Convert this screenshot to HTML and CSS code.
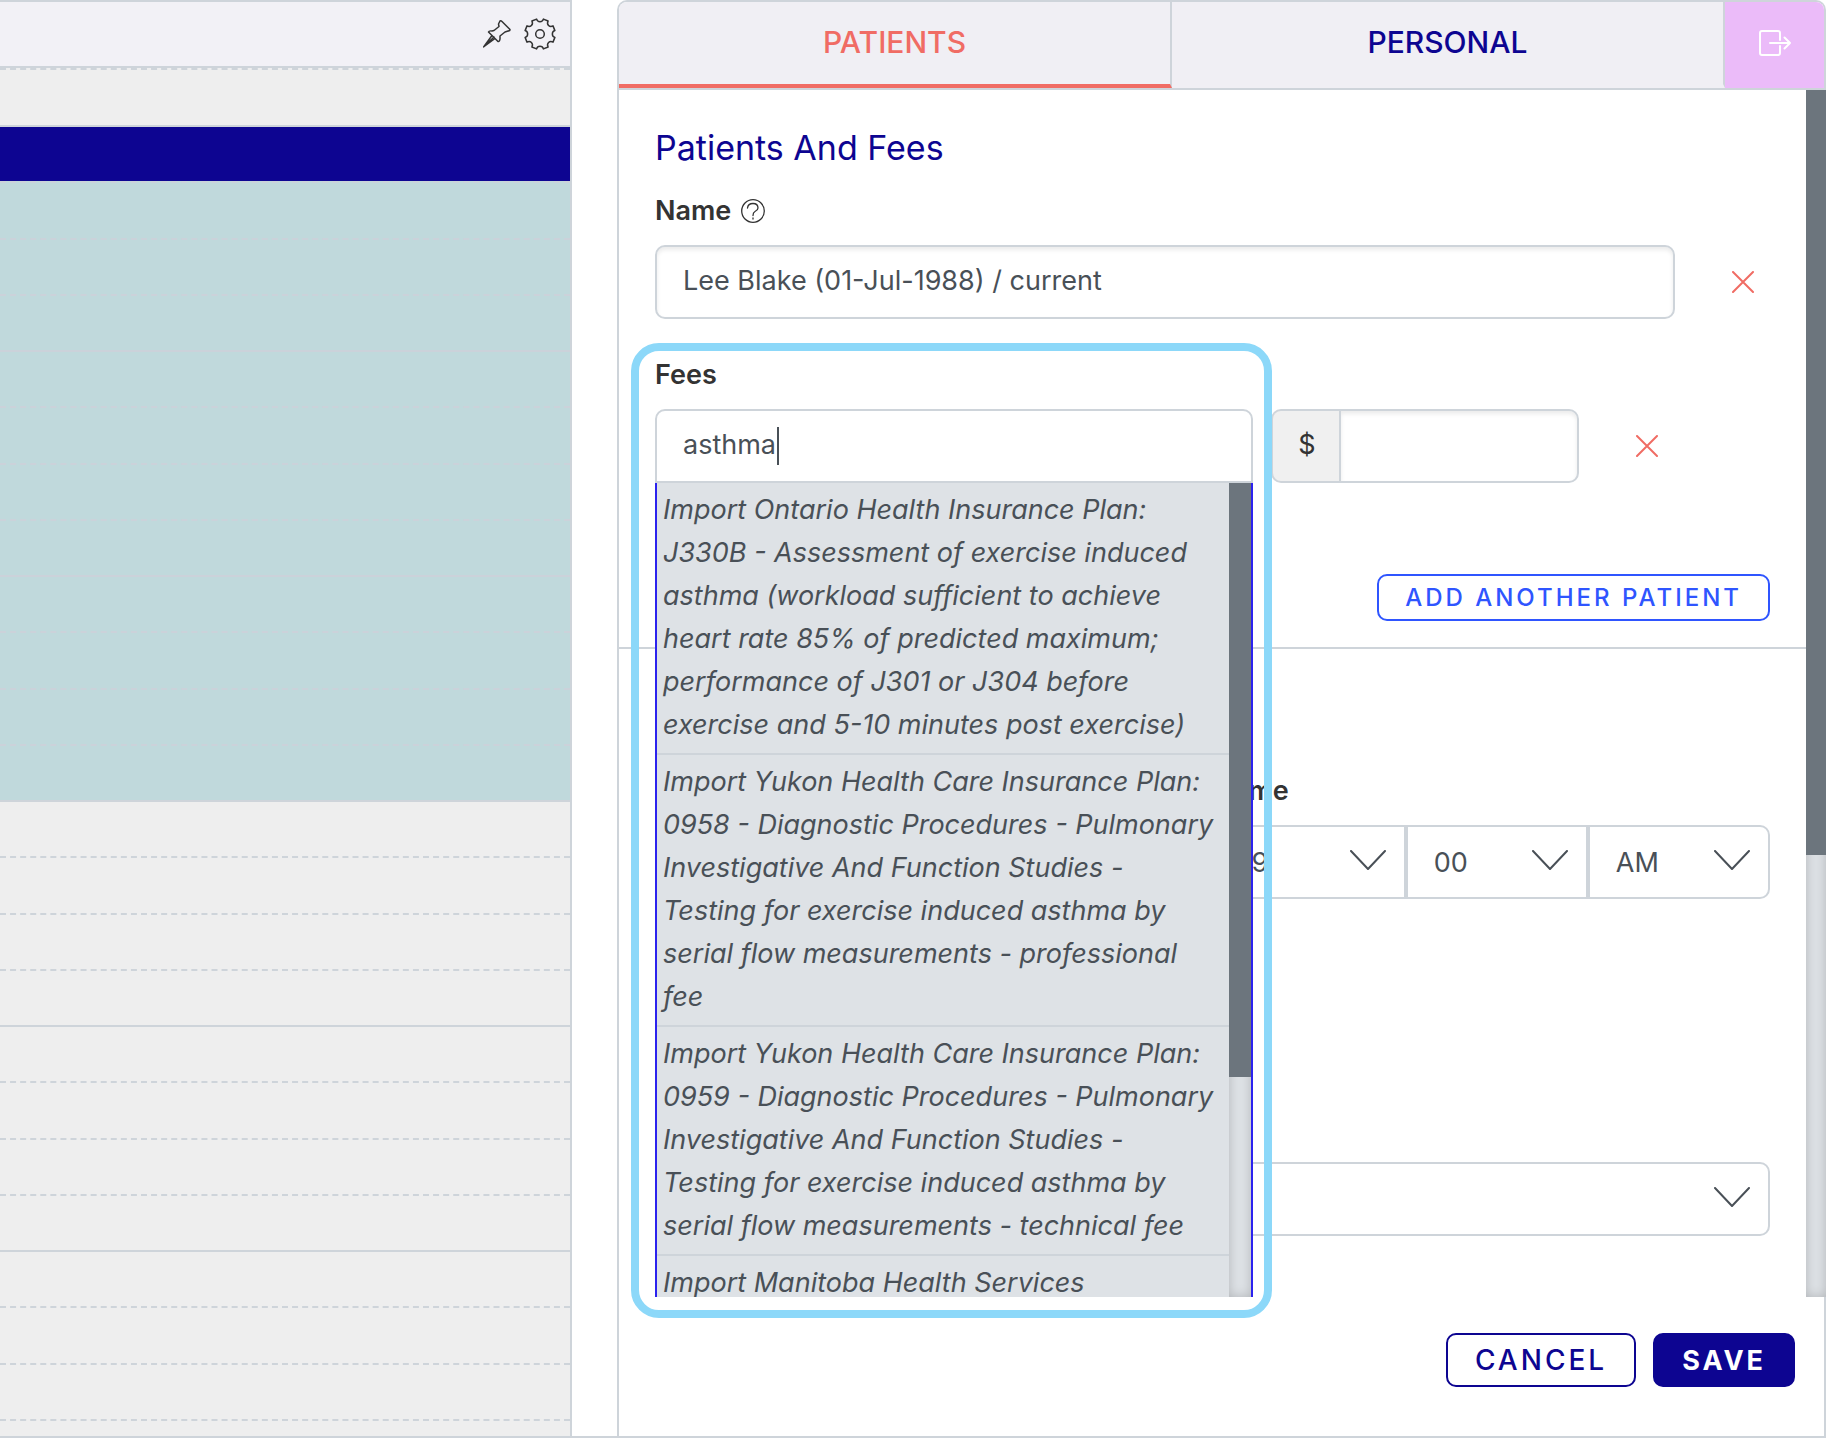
FILE: index.html
```html
<!DOCTYPE html>
<html lang="en">
  <head>
    <meta charset="UTF-8" />
    <meta name="viewport" content="width=device-width, initial-scale=1" />
    <title>Patients And Fees</title>
    <link rel="stylesheet" href="styles.css">
  </head>
  <body>
    <main class="layout">
      <section class="calendar" aria-label="Calendar">
        <header class="calendar-header">
          <button class="icon-button" type="button" aria-label="Pin">
            <svg width="28" height="28" viewBox="0 0 28 28"><path d="M17 1 Q18 0.500 19 1.500 L27 9.500 Q27 11 25 11 L22 12 L17 16 V19 Q16.500 22 15 21.500 L5.500 12 Q6 10.500 9 11 L11 10.500 L16 6.500 L15.500 4 Z M9 15.500 L0.500 27 L12 18.500 M11 17 L1 26.500" /></svg>
          </button>
          <button class="icon-button" type="button" aria-label="Settings">
            <svg width="32" height="32" viewBox="0 0 32 32"><circle cx="16" cy="16" r="4.300" /><path d="M30.900 12.600 C27.500 13.500 27.500 18.500 30.900 19.400 L29 24.100 C25.500 22.300 22.300 25.500 24.100 29 L19.400 30.900 C18.500 27.500 13.500 27.500 12.600 30.900 L7.900 29 C9.700 25.500 6.500 22.300 3 24.100 L1.100 19.400 C4.500 18.500 4.500 13.500 1.100 12.600 L3 7.900 C6.500 9.700 9.700 6.500 7.900 3 L12.600 1.100 C13.500 4.500 18.500 4.500 19.400 1.100 L24.100 3 C22.300 6.500 25.500 9.700 29 7.900 Z" /></svg>
          </button>
        </header>
        <div class="slot slot-first"></div>
        <div class="hour booked">
          <div class="slot event-title"></div>
          <div class="slot"></div>
          <div class="slot"></div>
          <div class="slot"></div>
        </div>
        <div class="hour booked">
          <div class="slot"></div>
          <div class="slot"></div>
          <div class="slot"></div>
          <div class="slot"></div>
        </div>
        <div class="hour booked">
          <div class="slot"></div>
          <div class="slot"></div>
          <div class="slot"></div>
          <div class="slot"></div>
        </div>
        <div class="hour">
          <div class="slot"></div>
          <div class="slot"></div>
          <div class="slot"></div>
          <div class="slot"></div>
        </div>
        <div class="hour">
          <div class="slot"></div>
          <div class="slot"></div>
          <div class="slot"></div>
          <div class="slot"></div>
        </div>
        <div class="hour">
          <div class="slot"></div>
          <div class="slot"></div>
          <div class="slot"></div>
          <div class="slot"></div>
        </div>
      </section>

      <form class="panel">
        <nav class="tabs">
          <button class="tab active" type="button">PATIENTS</button>
          <button class="tab" type="button">PERSONAL</button>
          <button class="tab-exit" type="button" aria-label="Close panel">
            <svg width="32" height="26" viewBox="0 0 32 26"><path d="M21 10 V3 Q21 1 19 1 H3 Q1 1 1 3 V23 Q1 25 3 25 H19 Q21 25 21 23 V16 M11 13 H31 M25.500 7.500 L31 13 L25.500 18.500" /></svg>
          </button>
        </nav>

        <div class="panel-main">
          <div class="panel-body">
            <section class="group patients">
              <h2>Patients And Fees</h2>
              <div class="label-row">
                <label for="name">Name</label>
                <svg class="help" width="24" height="24" viewBox="0 0 24 24"><circle cx="12" cy="12" r="11.300" /><path d="M6.500 9 Q7 4.500 12 4.500 Q17 4.500 17 9 Q17 11 14 12.500 Q12 13.500 12 16.500 M12 19 V20" /></svg>
              </div>
              <div class="row">
                <input class="control" id="name" type="text" value="Lee Blake (01-Jul-1988) / current" />
                <button class="remove" type="button" aria-label="Remove patient">
                  <svg width="22" height="22" viewBox="0 0 22 22"><path d="M1 1 L21 21 M21 1 L1 21" /></svg>
                </button>
              </div>

              <div class="row fees-row">
                <div class="fee-search">
                  <label for="fee">Fees</label>
                  <div class="combo">
                    <input class="control" id="fee" type="text" value="asthma" />
                    <span class="caret"></span>
                    <div class="menu">
                      <ul>
                        <li>Import Ontario Health Insurance Plan: J330B - Assessment of exercise induced asthma (workload sufficient to achieve heart rate 85% of predicted maximum; performance of J301 or J304 before exercise and 5-10 minutes post exercise)</li>
                        <li>Import Yukon Health Care Insurance Plan: 0958 - Diagnostic Procedures - Pulmonary Investigative And Function Studies - Testing for exercise induced asthma by serial flow measurements - professional fee</li>
                        <li>Import Yukon Health Care Insurance Plan: 0959 - Diagnostic Procedures - Pulmonary Investigative And Function Studies - Testing for exercise induced asthma by serial flow measurements - technical fee</li>
                        <li>Import Manitoba Health Services</li>
                      </ul>
                      <div class="track"><div class="thumb menu-thumb"></div></div>
                    </div>
                  </div>
                </div>
                <div class="amount">
                  <label class="amount-sign" for="amount">$</label>
                  <input class="control" id="amount" type="text" />
                </div>
                <button class="remove" type="button" aria-label="Remove fee">
                  <svg width="22" height="22" viewBox="0 0 22 22"><path d="M1 1 L21 21 M21 1 L1 21" /></svg>
                </button>
              </div>

              <button class="add" type="button">ADD ANOTHER PATIENT</button>
            </section>

            <section class="group schedule">
              <div class="time">
                <label for="hour">Time</label>
                <div class="time-selects">
                  <div class="select">
                    <select class="control" id="hour"><option>9</option></select>
                    <svg width="36" height="20" viewBox="0 0 36 20"><path d="M1 1 L18 19 L35 1" /></svg>
                  </div>
                  <div class="select">
                    <select class="control" aria-label="Minutes"><option>00</option></select>
                    <svg width="36" height="20" viewBox="0 0 36 20"><path d="M1 1 L18 19 L35 1" /></svg>
                  </div>
                  <div class="select">
                    <select class="control" aria-label="AM or PM"><option>AM</option></select>
                    <svg width="36" height="20" viewBox="0 0 36 20"><path d="M1 1 L18 19 L35 1" /></svg>
                  </div>
                </div>
              </div>
              <div class="select wide">
                <select class="control" aria-label="Location"><option></option></select>
                <svg width="36" height="20" viewBox="0 0 36 20"><path d="M1 1 L18 19 L35 1" /></svg>
              </div>
            </section>
          </div>
          <div class="track"><div class="thumb panel-thumb"></div></div>
        </div>

        <footer class="panel-footer">
          <button class="cancel" type="button">CANCEL</button>
          <button class="save" type="submit">SAVE</button>
        </footer>
      </form>
    </main>
  </body>
</html>
```

FILE: styles.css
```css
:root {
  --line: #ced4da;
  --navy: #0d0591;
  --coral: #f06c64;
  --blue: #2f55ff;
  --text: #495057;
  --dark: #333333;
}

*,
*::after {
  box-sizing: border-box;
}

body {
  margin: 0;
  font-family: Inter, "Liberation Sans", sans-serif;
  font-size: 27px;
  color: var(--text);
  background: white;
}

button,
input,
select {
  font: inherit;
  color: inherit;
  margin: 0;
}

button {
  background: none;
  border: 0;
  padding: 0;
  cursor: pointer;
}

svg {
  display: block;
  flex: none;
  fill: none;
  stroke: currentColor;
  stroke-width: 2;
  stroke-linecap: round;
  stroke-linejoin: round;
}

.layout {
  display: grid;
  grid-template-columns: 572px 1fr;
  column-gap: 45px;
  height: 100vh;
  overflow: hidden;
  border-bottom: 2px solid var(--line);
}

/* calendar */
.calendar {
  overflow: hidden;
  border: solid var(--line);
  border-width: 2px 2px 0 0;
  background: #eeeeee;
}

.calendar-header {
  display: flex;
  justify-content: flex-end;
  align-items: center;
  gap: 13px;
  height: 66px;
  padding-right: 14px;
  border-bottom: 2px solid var(--line);
  background: #f2f1f6;
  color: var(--dark);
}

.icon-button svg {
  stroke-width: 1.5;
}

.slot {
  flex: 1;
  border-top: 2px dashed var(--line);
}

.slot-first {
  height: 57px;
}

.hour {
  display: flex;
  flex-direction: column;
  height: 225px;
}

.hour .slot:first-child {
  border-top-style: solid;
}

.booked {
  background: #c0d9dc;
}

.booked .slot {
  border-top-color: #cbd2da;
}

.booked .event-title {
  background: var(--navy);
  border-top-color: var(--line);
}

/* panel */
.panel {
  display: flex;
  flex-direction: column;
  min-width: 0;
  border: 2px solid var(--line);
  border-bottom: 0;
  border-radius: 10px 10px 0 0;
}

.tabs {
  display: flex;
  height: 88px;
  border-bottom: 2px solid var(--line);
  border-radius: 8px 8px 0 0;
  overflow: hidden;
  background: #f0eff4;
}

.tab {
  flex: 1;
  padding-bottom: 2px;
  border-right: 2px solid var(--line);
  border-bottom: 4px solid transparent;
  color: var(--navy);
  font-size: 30px;
  font-weight: 500;
}

.tab.active {
  color: var(--coral);
  border-bottom-color: var(--coral);
}

.tab-exit {
  display: flex;
  align-items: center;
  justify-content: center;
  width: 99px;
  padding-bottom: 4px;
  background: #ebbbf9;
  color: white;
}

.panel-main {
  display: flex;
  flex: 1;
  min-height: 0;
  margin-right: -2px;
}

.panel-body {
  flex: 1;
}

.group {
  padding: 0 36px;
}

.patients {
  padding-top: 36px;
  padding-bottom: 26px;
  border-bottom: 2px solid var(--line);
}

h2 {
  margin: 0 0 20px;
  font-size: 34px;
  font-weight: 400;
  line-height: 44px;
  color: var(--navy);
}

label {
  display: block;
  font-weight: 600;
  line-height: 42px;
  color: var(--dark);
}

.label-row {
  display: flex;
  align-items: center;
  gap: 10px;
  margin-bottom: 13px;
}

.help {
  color: var(--dark);
  stroke-width: 1.3;
}

.row {
  display: flex;
}

.control {
  width: 100%;
  min-width: 0;
  height: 74px;
  padding: 0 26px;
  border: 2px solid var(--line);
  border-radius: 10px;
  background: white;
  box-shadow: inset 0 3px 4px rgba(0, 0, 0, 0.08);
}

input.control {
  padding-bottom: 3px;
}

.row > .control {
  flex: 1;
}

.remove {
  display: flex;
  align-items: center;
  justify-content: center;
  width: 95px;
  height: 74px;
  padding-left: 41px;
  color: var(--coral);
}

.fees-row {
  align-items: flex-end;
  margin-top: 35px;
}

.fee-search {
  position: relative;
  flex: 1;
}

/* ring round the search box and its results */
.fee-search::after {
  content: "";
  position: absolute;
  z-index: 3;
  top: -11px;
  left: -24px;
  right: -19px;
  height: 975px;
  border: 8px solid #8cd8f9;
  border-radius: 28px;
  pointer-events: none;
}

.fee-search label {
  margin-bottom: 13px;
}

.combo {
  position: relative;
}

.combo .control {
  display: block;
  border-radius: 10px 10px 0 0;
  box-shadow: none;
}

.caret {
  position: absolute;
  top: 18px;
  left: 122px;
  width: 2px;
  height: 38px;
  background: var(--text);
}

.menu {
  position: absolute;
  z-index: 2;
  top: 100%;
  left: 0;
  right: 0;
  display: flex;
  height: 814px;
  overflow: hidden;
  border: solid #2b22ee;
  border-width: 0 2px;
  background: #dee2e6;
}

.menu ul {
  flex: 1;
  margin: 0;
  padding: 0;
  list-style: none;
}

.menu li {
  padding: 5px 8px 7px 6px;
  border-bottom: 2px solid var(--line);
  font-style: italic;
  line-height: 43px;
}

.track {
  width: 22px;
  background: #dee2e6;
  box-shadow: inset 0 0 12px rgba(0, 0, 0, 0.2);
}

.panel-main > .track {
  width: 20px;
}

.thumb {
  background: #6c757d;
}

.menu-thumb {
  height: 73%;
}

.panel-thumb {
  height: 63.4%;
}

.amount {
  display: flex;
  width: 308px;
  margin-left: 18px;
}

.amount-sign {
  flex: none;
  width: 68px;
  padding-left: 2px;
  border: 2px solid var(--line);
  border-right: 0;
  border-radius: 10px 0 0 10px;
  background: #f0f0f0;
  font-weight: 400;
  line-height: 68px;
  text-align: center;
}

.amount .control {
  border-radius: 0 10px 10px 0;
}

.fees-row .remove {
  width: 191px;
  padding: 0 56px 0 0;
}

.add {
  display: block;
  height: 47px;
  margin: 91px 0 0 auto;
  padding: 0 26px;
  border: 2px solid var(--blue);
  border-radius: 10px;
  color: var(--blue);
  font-size: 24px;
  font-weight: 500;
  letter-spacing: 3px;
}

.schedule {
  display: grid;
  grid-template-columns: 1fr 1fr;
  column-gap: 22px;
  row-gap: 263px;
  padding-top: 121px;
}

.time {
  grid-column: 2;
}

.time label {
  margin-bottom: 13px;
}

.time-selects {
  display: flex;
}

.select {
  position: relative;
  flex: 1;
}

.select .control {
  display: block;
  appearance: none;
  box-shadow: none;
}

.select svg {
  position: absolute;
  top: 25px;
  right: 20px;
  pointer-events: none;
}

.time-selects .control {
  border-radius: 0;
}

.time-selects .select:first-child .control {
  border-radius: 10px 0 0 10px;
}

.time-selects .select:last-child .control {
  border-radius: 0 10px 10px 0;
}

.wide {
  grid-column: 1 / -1;
}

.panel-footer {
  display: flex;
  justify-content: flex-end;
  gap: 17px;
  padding: 36px 29px 49px;
}

.cancel,
.save {
  height: 54px;
  padding: 0 27px;
  border: 2px solid var(--navy);
  border-radius: 10px;
  color: var(--navy);
  font-size: 28px;
  font-weight: 500;
  letter-spacing: 3px;
}

.save {
  background: var(--navy);
  color: white;
  font-size: 27px;
  font-weight: 700;
}
```
